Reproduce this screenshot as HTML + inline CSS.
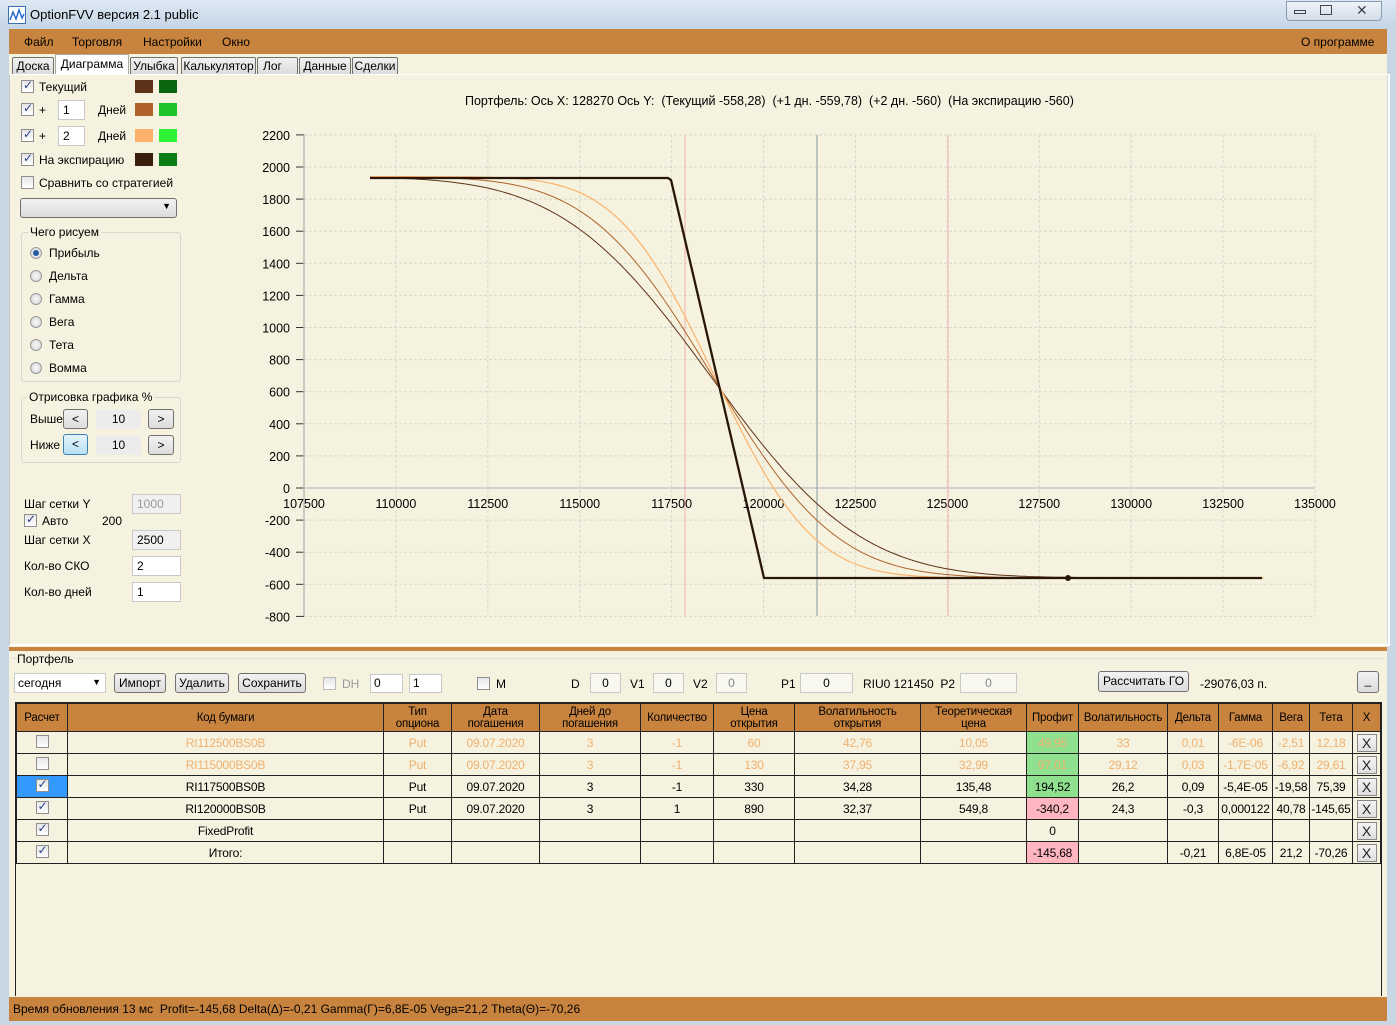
<!DOCTYPE html>
<html><head><meta charset="utf-8">
<style>
*{box-sizing:border-box;margin:0;padding:0}
body{width:1396px;height:1025px;overflow:hidden;background:#c9d6e3;font-family:"Liberation Sans","DejaVu Sans",sans-serif;font-size:12px;color:#000;position:relative}
.a{position:absolute}
.t{position:absolute;white-space:nowrap}
.cb{position:absolute;width:13px;height:13px;border:1px solid #8f8f8f;background:linear-gradient(#e6e6e6,#fff)}
.cb.on::after{content:"✓";position:absolute;left:1px;top:-3px;font-size:12px;color:#2a3f8c;font-weight:bold}
.rd{position:absolute;width:12px;height:12px;border-radius:50%;border:1px solid #9a9a9a;background:radial-gradient(#f8f8f8,#d4d4d4)}
.rd.on::after{content:"";position:absolute;left:2px;top:2px;width:6px;height:6px;border-radius:50%;background:#1f5d9c}
.inp{position:absolute;background:#fff;border:1px solid #c8c8c8;padding:2px 4px;font-size:12px}
.btn{position:absolute;border:1px solid #707070;border-radius:3px;background:linear-gradient(#f2f2f2,#dcdcdc);text-align:center;font-size:12px}
.sw{position:absolute;width:18px;height:13px}
table{border-collapse:collapse;position:absolute;left:16px;top:703px;table-layout:fixed;font-size:12px;letter-spacing:-0.2px}
td{border:1px solid #222;height:22px;text-align:center;padding:0;white-space:nowrap;overflow:hidden}
tr.h td{background:#c8843f;height:28px;line-height:12px;font-size:11.5px}
.f td{color:#f0b070}
.x{display:inline-block;width:20px;height:18px;border:1px solid #888;background:linear-gradient(#f4f4f4,#dedede);line-height:16px;font-size:14px;color:#222}
</style></head><body>
<div class="a" style="left:0;top:0;width:1396px;height:29px;background:linear-gradient(#dde8f3,#c5d5e6)"></div>
<svg class="a" style="left:8px;top:6px" width="18" height="18"><rect x="0.5" y="0.5" width="17" height="17" fill="#fff" stroke="#3a6fb8"/><polyline points="2,14 5,6 8,13 11,4 14,12 16,8" fill="none" stroke="#2a6ad0" stroke-width="1.5"/></svg>
<div class="t" style="left:30px;top:7px;font-size:13px">OptionFVV версия 2.1 public</div>
<div class="a" style="left:1286px;top:1px;width:96px;height:20px;border:1px solid #8a9ab0;border-radius:0 0 4px 4px;background:linear-gradient(#eef3f8,#d3dde8)"></div>
<div class="a" style="left:1294px;top:10px;width:12px;height:4px;border:1px solid #445"></div>
<div class="a" style="left:1320px;top:5px;width:12px;height:10px;border:1px solid #445"></div>
<div class="t" style="left:1356px;top:2px;font-size:14px;color:#445">✕</div>
<div class="a" style="left:9px;top:29px;width:1378px;height:992px;background:#f5f3df"></div>
<div class="a" style="left:9px;top:29px;width:1378px;height:25px;background:#c8843f"></div>
<div class="t" style="left:24px;top:35px">Файл</div>
<div class="t" style="left:72px;top:35px">Торговля</div>
<div class="t" style="left:143px;top:35px">Настройки</div>
<div class="t" style="left:222px;top:35px">Окно</div>
<div class="t" style="left:1301px;top:35px">О программе</div>
<div class="a" style="left:9px;top:54px;width:1378px;height:20px;background:#f5f3df"></div>
<div class="btn" style="left:12px;top:57px;width:42px;height:18px;border-radius:2px;line-height:16px">Доска</div>
<div class="a" style="left:55px;top:54px;width:74px;height:21px;background:#fff;border:1px solid #aaa;border-bottom:none;text-align:center;line-height:18px">Диаграмма</div>
<div class="btn" style="left:130px;top:57px;width:48px;height:18px;border-radius:2px;line-height:16px">Улыбка</div>
<div class="btn" style="left:181px;top:57px;width:75px;height:18px;border-radius:2px;line-height:16px">Калькулятор</div>
<div class="btn" style="left:257px;top:57px;width:41px;height:18px;border-radius:2px;line-height:16px;text-align:left;padding-left:5px">Лог</div>
<div class="btn" style="left:299px;top:57px;width:52px;height:18px;border-radius:2px;line-height:16px">Данные</div>
<div class="btn" style="left:352px;top:57px;width:46px;height:18px;border-radius:2px;line-height:16px">Сделки</div>
<div class="a" style="left:9px;top:74px;width:1381px;height:572px;border:1px solid #c8c8c8;border-top:1px solid #fff;border-right:2px solid #fff;border-bottom:2px solid #fff"></div>
<div class="cb on" style="left:21px;top:80px"></div><div class="t" style="left:39px;top:80px">Текущий</div>
<div class="sw" style="left:135px;top:80px;background:#5d3218"></div><div class="sw" style="left:159px;top:80px;background:#0a6510"></div>
<div class="cb on" style="left:21px;top:103px"></div><div class="t" style="left:39px;top:103px">+</div>
<div class="inp" style="left:58px;top:100px;width:27px;height:20px">1</div><div class="t" style="left:98px;top:103px">Дней</div>
<div class="sw" style="left:135px;top:103px;background:#b0622a"></div><div class="sw" style="left:159px;top:103px;background:#1ec32a"></div>
<div class="cb on" style="left:21px;top:129px"></div><div class="t" style="left:39px;top:129px">+</div>
<div class="inp" style="left:58px;top:126px;width:27px;height:20px">2</div><div class="t" style="left:98px;top:129px">Дней</div>
<div class="sw" style="left:135px;top:129px;background:#fcb26a"></div><div class="sw" style="left:159px;top:129px;background:#2df335"></div>
<div class="cb on" style="left:21px;top:153px"></div><div class="t" style="left:39px;top:153px">На экспирацию</div>
<div class="sw" style="left:135px;top:153px;background:#3a200c"></div><div class="sw" style="left:159px;top:153px;background:#0a7d14"></div>
<div class="cb" style="left:21px;top:176px"></div><div class="t" style="left:39px;top:176px">Сравнить со стратегией</div>
<div class="btn" style="left:20px;top:198px;width:157px;height:20px"><span style="position:absolute;right:5px;top:2px;font-size:9px">▼</span></div>
<div class="a" style="left:21px;top:232px;width:160px;height:150px;border:1px solid #d8d8d0;border-radius:3px"></div>
<div class="t" style="left:28px;top:225px;background:#f5f3df;padding:0 2px">Чего рисуем</div>
<div class="rd on" style="left:30px;top:247px"></div><div class="t" style="left:49px;top:246px">Прибыль</div>
<div class="rd" style="left:30px;top:270px"></div><div class="t" style="left:49px;top:269px">Дельта</div>
<div class="rd" style="left:30px;top:293px"></div><div class="t" style="left:49px;top:292px">Гамма</div>
<div class="rd" style="left:30px;top:316px"></div><div class="t" style="left:49px;top:315px">Вега</div>
<div class="rd" style="left:30px;top:339px"></div><div class="t" style="left:49px;top:338px">Тета</div>
<div class="rd" style="left:30px;top:362px"></div><div class="t" style="left:49px;top:361px">Вомма</div>
<div class="a" style="left:21px;top:397px;width:160px;height:66px;border:1px solid #d8d8d0;border-radius:3px"></div>
<div class="t" style="left:27px;top:390px;background:#f5f3df;padding:0 2px">Отрисовка графика %</div>
<div class="t" style="left:30px;top:412px">Выше</div>
<div class="btn" style="left:63px;top:409px;width:25px;height:20px;line-height:18px">&lt;</div>
<div class="a" style="left:96px;top:410px;width:45px;height:19px;background:#ececec;text-align:center;line-height:18px">10</div>
<div class="btn" style="left:148px;top:409px;width:26px;height:20px;line-height:18px">&gt;</div>
<div class="t" style="left:30px;top:438px">Ниже</div>
<div class="btn" style="left:63px;top:434px;width:25px;height:21px;line-height:19px;border-color:#3c7fb1;background:linear-gradient(#e6f4fc,#b9e0f5)">&lt;</div>
<div class="a" style="left:96px;top:436px;width:45px;height:19px;background:#ececec;text-align:center;line-height:18px">10</div>
<div class="btn" style="left:148px;top:435px;width:26px;height:20px;line-height:18px">&gt;</div>
<div class="t" style="left:24px;top:497px">Шаг сетки Y</div>
<div class="inp" style="left:132px;top:494px;width:49px;height:20px;background:#f0f0f0;color:#999">1000</div>
<div class="cb on" style="left:24px;top:514px"></div><div class="t" style="left:42px;top:514px">Авто</div><div class="t" style="left:102px;top:514px">200</div>
<div class="t" style="left:24px;top:533px">Шаг сетки X</div>
<div class="inp" style="left:132px;top:530px;width:49px;height:20px;background:#f0f0f0">2500</div>
<div class="t" style="left:24px;top:559px">Кол-во СКО</div>
<div class="inp" style="left:132px;top:556px;width:49px;height:20px">2</div>
<div class="t" style="left:24px;top:585px">Кол-во дней</div>
<div class="inp" style="left:132px;top:582px;width:49px;height:20px">1</div>
<div class="t" style="left:465px;top:94px;font-size:12.5px">Портфель: Ось X: 128270 Ось Y: &nbsp;(Текущий -558,28) &nbsp;(+1 дн. -559,78) &nbsp;(+2 дн. -560) &nbsp;(На экспирацию -560)</div>
<svg id="ch" class="a" style="left:0;top:0" width="1396" height="650" font-family="Liberation Sans, sans-serif" font-size="12.5"></svg>
<div class="a" style="left:9px;top:647px;width:1378px;height:4px;background:#c8843f"></div>
<div class="a" style="left:12px;top:658px;width:1372px;height:1px;background:#e0e0d8"></div>
<div class="t" style="left:17px;top:652px;background:#f5f3df;padding-right:3px">Портфель</div>
<div class="a" style="left:14px;top:673px;width:92px;height:20px;background:#fff;border:1px solid #ccc;padding:2px 3px">сегодня<span style="position:absolute;right:4px;top:3px;font-size:9px">▼</span></div>
<div class="btn" style="left:114px;top:673px;width:52px;height:20px;line-height:18px">Импорт</div>
<div class="btn" style="left:175px;top:673px;width:54px;height:20px;line-height:18px">Удалить</div>
<div class="btn" style="left:238px;top:673px;width:68px;height:20px;line-height:18px">Сохранить</div>
<div class="cb" style="left:323px;top:677px;border-color:#bbb"></div><div class="t" style="left:342px;top:677px;color:#999">DH</div>
<div class="inp" style="left:370px;top:674px;width:33px;height:19px;padding:1px 3px">0</div>
<div class="inp" style="left:409px;top:674px;width:33px;height:19px;padding:1px 3px">1</div>
<div class="cb" style="left:477px;top:677px"></div><div class="t" style="left:496px;top:677px">M</div>
<div class="t" style="left:571px;top:677px">D</div><div class="inp" style="left:590px;top:673px;width:31px;height:20px;text-align:center;background:#f8f8f0">0</div>
<div class="t" style="left:630px;top:677px">V1</div><div class="inp" style="left:653px;top:673px;width:31px;height:20px;text-align:center;background:#f8f8f0">0</div>
<div class="t" style="left:693px;top:677px">V2</div><div class="inp" style="left:716px;top:673px;width:31px;height:20px;text-align:center;color:#888;background:#f8f8f0">0</div>
<div class="t" style="left:781px;top:677px">P1</div><div class="inp" style="left:800px;top:673px;width:53px;height:20px;text-align:center;background:#f8f8f0">0</div>
<div class="t" style="left:863px;top:677px">RIU0 121450 &nbsp;P2</div><div class="inp" style="left:960px;top:673px;width:57px;height:20px;text-align:center;color:#888;background:#f8f8f0">0</div>
<div class="btn" style="left:1098px;top:671px;width:91px;height:21px;line-height:19px">Рассчитать ГО</div>
<div class="t" style="left:1200px;top:677px">-29076,03 п.</div>
<div class="btn" style="left:1357px;top:671px;width:22px;height:22px;line-height:16px">_</div>
<div class="a" style="left:15px;top:702px;width:1367px;height:294px;border:1px solid #222;border-bottom:none"></div>
<table>
<colgroup><col style="width:51px"><col style="width:316px"><col style="width:68px"><col style="width:88px"><col style="width:101px"><col style="width:73px"><col style="width:81px"><col style="width:126px"><col style="width:106px"><col style="width:52px"><col style="width:89px"><col style="width:51px"><col style="width:54px"><col style="width:37px"><col style="width:43px"><col style="width:28px"></colgroup>
<tr class="h"><td>Расчет</td><td>Код бумаги</td><td>Тип<br>опциона</td><td>Дата<br>погашения</td><td>Дней до<br>погашения</td><td>Количество</td><td>Цена<br>открытия</td><td>Волатильность<br>открытия</td><td>Теоретическая<br>цена</td><td>Профит</td><td>Волатильность</td><td>Дельта</td><td>Гамма</td><td>Вега</td><td>Тета</td><td>X</td></tr>
<tr class="f"><td><span class="cb" style="position:relative;display:inline-block"></span></td><td>RI112500BS0B</td><td>Put</td><td>09.07.2020</td><td>3</td><td>-1</td><td>60</td><td>42,76</td><td>10,05</td><td style="background:#8fe08f">49,95</td><td>33</td><td>0,01</td><td>-6E-06</td><td>-2,51</td><td>12,18</td><td><span class="x">X</span></td></tr>
<tr class="f"><td><span class="cb" style="position:relative;display:inline-block"></span></td><td>RI115000BS0B</td><td>Put</td><td>09.07.2020</td><td>3</td><td>-1</td><td>130</td><td>37,95</td><td>32,99</td><td style="background:#8fe08f">97,01</td><td>29,12</td><td>0,03</td><td>-1,7E-05</td><td>-6,92</td><td>29,61</td><td><span class="x">X</span></td></tr>
<tr><td style="background:#3399ff"><span class="cb on" style="position:relative;display:inline-block"></span></td><td>RI117500BS0B</td><td>Put</td><td>09.07.2020</td><td>3</td><td>-1</td><td>330</td><td>34,28</td><td>135,48</td><td style="background:#8fe08f">194,52</td><td>26,2</td><td>0,09</td><td>-5,4E-05</td><td>-19,58</td><td>75,39</td><td><span class="x">X</span></td></tr>
<tr><td><span class="cb on" style="position:relative;display:inline-block"></span></td><td>RI120000BS0B</td><td>Put</td><td>09.07.2020</td><td>3</td><td>1</td><td>890</td><td>32,37</td><td>549,8</td><td style="background:#ffb6c1">-340,2</td><td>24,3</td><td>-0,3</td><td>0,000122</td><td>40,78</td><td>-145,65</td><td><span class="x">X</span></td></tr>
<tr><td><span class="cb on" style="position:relative;display:inline-block"></span></td><td>FixedProfit</td><td></td><td></td><td></td><td></td><td></td><td></td><td></td><td>0</td><td></td><td></td><td></td><td></td><td></td><td><span class="x">X</span></td></tr>
<tr><td><span class="cb on" style="position:relative;display:inline-block"></span></td><td>Итого:</td><td></td><td></td><td></td><td></td><td></td><td></td><td></td><td style="background:#ffb6c1">-145,68</td><td></td><td>-0,21</td><td>6,8E-05</td><td>21,2</td><td>-70,26</td><td><span class="x">X</span></td></tr>
</table>
<div class="a" style="left:9px;top:997px;width:1378px;height:24px;background:#c8843f"></div>
<div class="t" style="left:13px;top:1002px">Время обновления 13 мс &nbsp;Profit=-145,68 Delta(Δ)=-0,21 Gamma(Γ)=6,8E-05 Vega=21,2 Theta(Θ)=-70,26</div>
<script>
(function(){
var s=document.getElementById('ch'),h='';
function X(p){return 304+(p-107500)*1011/27500}
function Y(v){return 488-v*0.1605}
for(var p=110000;p<=135000;p+=2500){var x=X(p);h+='<line x1="'+x+'" y1="135" x2="'+x+'" y2="616" stroke="#d8d8cc" stroke-dasharray="3,2"/>';}
for(var v=-800;v<=2200;v+=200){var y=Y(v);h+='<line x1="304" y1="'+y+'" x2="1315" y2="'+y+'" stroke="#d8d8cc" stroke-dasharray="3,2"/>';h+='<line x1="296" y1="'+y+'" x2="304" y2="'+y+'" stroke="#333"/>';h+='<text x="290" y="'+(y+5)+'" text-anchor="end">'+v+'</text>';}
h+='<line x1="304" y1="135" x2="304" y2="616" stroke="#bbb" stroke-width="1.5"/>';
h+='<line x1="304" y1="488" x2="1315" y2="488" stroke="#c8c8c8" stroke-width="1.5"/>';
for(var p=107500;p<=135000;p+=2500){var x=X(p);h+='<text x="'+x+'" y="508" text-anchor="middle">'+p+'</text>';}
h+='<line x1="685" y1="135" x2="685" y2="616" stroke="#f0b0b0"/>';
h+='<line x1="948" y1="135" x2="948" y2="616" stroke="#f0b0b0"/>';
h+='<line x1="817" y1="135" x2="817" y2="616" stroke="#8899a0"/>';
function erf(x){var t=1/(1+0.3275911*Math.abs(x));var y=1-(((((1.061405429*t-1.453152027)*t)+1.421413741)*t-0.284496736)*t+0.254829592)*t*Math.exp(-x*x);return x>=0?y:-y}
function N(z){return 0.5*(1+erf(z/Math.SQRT2))}
function curve(sig,col,w){var c=118870-0.09*sig;var pts=[];for(var p=109300;p<=133600;p+=100){var v=-560+2500*(1-N((p-c)/sig));pts.push(X(p).toFixed(1)+','+Y(v).toFixed(1));}h+='<polyline points="'+pts.join(' ')+'" fill="none" stroke="'+col+'" stroke-width="'+w+'"/>';}
curve(3200,'#5d3218',1);curve(2650,'#b0622a',1);curve(2100,'#fcb26a',1.2);
h+='<polyline points="370,178 668,178 671,180 764,578 1262,578" fill="none" stroke="#2a1608" stroke-width="2.3"/>';
h+='<circle cx="1068" cy="578" r="3" fill="#2a1608"/>';
s.innerHTML=h;
})();
</script>
</body></html>
